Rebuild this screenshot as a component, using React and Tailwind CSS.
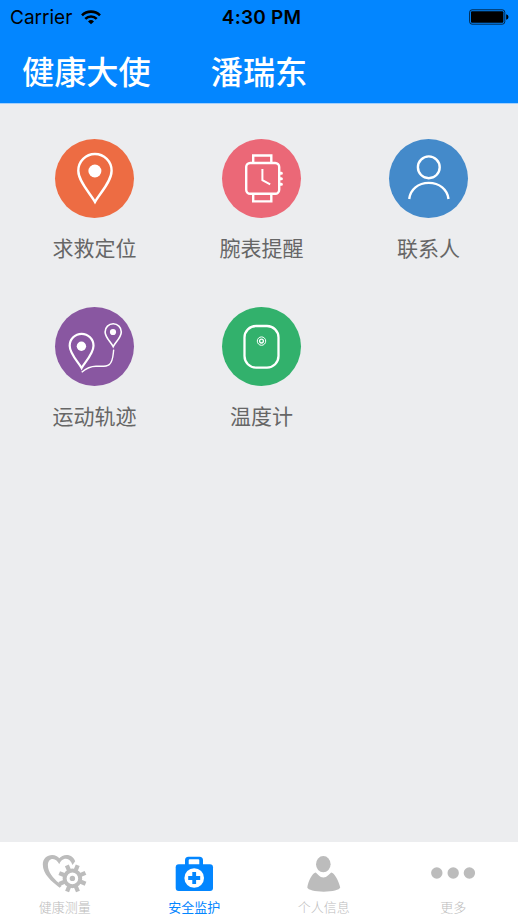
import { useState } from 'react';
import clsx from 'clsx';

const LocationIcon = () => (
  <svg viewBox="0 0 79 79" className="w-full h-full" fill="none" stroke="white" strokeWidth="2.4">
    <path d="M40 63C36 55.5 23.3 42.5 23.3 31.7a16.6 16.6 0 0 1 33.3 0C56.6 42.5 44 55.5 40 63Z" />
    <circle cx="39.9" cy="32" r="6.5" fill="white" stroke="none" />
  </svg>
);

const WatchIcon = () => (
  <svg viewBox="0 0 79 79" className="w-full h-full" fill="none" stroke="white" strokeWidth="2.4">
    <path d="M31.2 23v-6.5h18.1V23M31.2 55v7.4h18.1V55" />
    <rect x="24.2" y="24" width="33" height="30.8" rx="4" />
    <path d="M40.4 30v11.2l7.8 4.2" strokeWidth="2" />
    <path d="M58 34.3h1.4M58 39.8h1.4M58 45.2h1.4" strokeWidth="3" strokeLinecap="round" />
  </svg>
);

const ContactIcon = () => (
  <svg viewBox="0 0 79 79" className="w-full h-full" fill="none" stroke="white" strokeWidth="2.4">
    <circle cx="39.8" cy="28.3" r="10.9" />
    <path d="M20.2 60C21.3 50.5 29.2 43.9 39.8 43.9S58.4 50.5 59.5 60" />
  </svg>
);

const TrackIcon = () => (
  <svg viewBox="0 0 79 79" className="w-full h-full" fill="none" stroke="white">
    <path d="M26.6 61C23.8 55.5 14.7 47 14.7 38.7a11.9 11.9 0 0 1 23.8 0C38.5 47 29.4 55.5 26.6 61Z" strokeWidth="2.2" />
    <circle cx="26.4" cy="39.3" r="4.7" fill="white" stroke="none" />
    <path d="M58.2 39.6C56.2 35.5 50.1 30.3 50.1 24.9a8.1 8.1 0 0 1 16.2 0C66.3 30.3 60.2 35.5 58.2 39.6Z" strokeWidth="1.6" />
    <circle cx="58" cy="25" r="3.1" fill="white" stroke="none" />
    <path d="M26.7 65.3C31 61.5 35.5 59.2 41 59.2S51 60 54.2 57.6C58.2 54.5 58 48 58.7 42.7" strokeWidth="1.4" />
  </svg>
);

const ThermometerIcon = () => (
  <svg viewBox="0 0 79 79" className="w-full h-full" fill="none" stroke="white">
    <rect x="22.5" y="19" width="34" height="41.6" rx="11.5" strokeWidth="2.3" />
    <circle cx="39.5" cy="34.1" r="4.2" strokeWidth="1" />
    <circle cx="39.5" cy="34.1" r="1.9" strokeWidth="1.3" />
  </svg>
);

const HealthTabIcon = () => (
  <svg viewBox="0 0 48 40" className="w-12 h-10" fill="none" stroke="currentColor">
    <path
      d="M18.7 34.7C10.5 28.5 1.8 21 1.8 11.5C1.8 5.5 6 1.9 11.2 1.9C14.3 1.9 16.8 3.2 18.3 5.2C20 3.2 22.4 1.9 25.6 1.9C29.8 1.9 33 4.5 34.2 8.2L31.5 12C30.2 8.2 28 5.8 25 5.8C21.5 5.8 19.5 8.2 18.3 11.3C16.8 8 14.5 5.9 11.8 5.9C8.6 5.9 6.9 8.6 6.9 12.2C6.9 19 12 25 18 30L20.5 33Z"
      fill="currentColor"
      stroke="none"
    />
    <circle cx="31.4" cy="25.4" r="11.4" fill="white" stroke="none" />
    <circle cx="31.4" cy="25.4" r="7.8" strokeWidth="4" />
    {[22, 67, 112, 157, 202, 247, 292, 337].map((angle) => (
      <path key={angle} d="M31.4 17v-5.8" strokeWidth="4.2" transform={`rotate(${angle} 31.4 25.4)`} />
    ))}
    <circle cx="31.4" cy="25.4" r="2.7" fill="currentColor" stroke="none" />
  </svg>
);

const SafetyTabIcon = () => (
  <svg viewBox="0 0 48 40" className="w-12 h-10" fill="currentColor">
    <rect x="5.7" y="11.3" width="37.3" height="26.7" rx="3" />
    <path d="M15 12V7.2Q15 3.7 18.5 3.7h11Q33 3.7 33 7.2V12H29.3V7.3Q29.3 6.3 28.3 6.3H19.7Q18.7 6.3 18.7 7.3V12Z" />
    <circle cx="24.2" cy="25" r="9.8" fill="white" />
    <path d="M22.3 19h3.8v4.1h4.1v3.8h-4.1V31h-3.8v-4.1h-4.1v-3.8h4.1Z" />
  </svg>
);

const ProfileTabIcon = () => (
  <svg viewBox="0 0 48 40" className="w-12 h-10" fill="currentColor">
    <ellipse cx="23.3" cy="11.2" rx="7.3" ry="8.1" />
    <path d="M15.8 19.4C17.8 21 19.6 24.4 23.4 24.4S29 21 31.2 19.4C34.5 19.9 38.8 27.5 40.2 34.6C39.6 37 32.5 38.7 23.7 38.7S7.8 37 7.3 34.6C8.2 27.5 12.4 19.9 15.8 19.4Z" />
  </svg>
);

const MoreTabIcon = () => (
  <svg viewBox="0 0 48 40" className="w-12 h-10" fill="currentColor">
    <circle cx="7.8" cy="20" r="5.7" />
    <circle cx="24.2" cy="20" r="5.7" />
    <circle cx="40.4" cy="20" r="5.7" />
  </svg>
);

const features = [
  { label: '求救定位', color: 'bg-[#ed6c43]', Icon: LocationIcon },
  { label: '腕表提醒', color: 'bg-[#eb6877]', Icon: WatchIcon },
  { label: '联系人', color: 'bg-[#448aca]', Icon: ContactIcon },
  { label: '运动轨迹', color: 'bg-[#8957a1]', Icon: TrackIcon },
  { label: '温度计', color: 'bg-[#32b16c]', Icon: ThermometerIcon },
];

const tabs = [
  { label: '健康测量', Icon: HealthTabIcon },
  { label: '安全监护', Icon: SafetyTabIcon },
  { label: '个人信息', Icon: ProfileTabIcon },
  { label: '更多', Icon: MoreTabIcon },
];

const StatusBar = () => (
  <div className="grid grid-cols-3 items-center h-[34px] pl-[10px] pr-[9px] text-black font-['Inter','Liberation_Sans',sans-serif]">
    <div className="flex items-center gap-[9px]">
      <span className="text-[19px] leading-none">Carrier</span>
      <svg viewBox="0 0 20 15" className="w-5 h-[15px]" fill="none" stroke="currentColor" strokeWidth="2.6">
        <path d="M1 5.3a12.8 12.8 0 0 1 18 0" />
        <path d="M4.3 8.9a8.1 8.1 0 0 1 11.4 0" />
        <path d="M10 14.3 7 11.4a4.3 4.3 0 0 1 6 0Z" fill="currentColor" stroke="none" />
      </svg>
    </div>
    <span className="pl-[4px] text-center text-[19px] leading-none tracking-[0.2px] font-semibold whitespace-nowrap">
      4:30 PM
    </span>
    <svg viewBox="0 0 40 16" className="w-10 h-4 justify-self-end">
      <rect x="0.6" y="0.8" width="35.2" height="14.4" rx="2.5" fill="none" stroke="black" strokeOpacity="0.7" strokeWidth="1" />
      <rect x="2" y="2.2" width="32.4" height="11.6" rx="1" fill="black" />
      <path d="M37.2 5.2q2.3 .8 2.3 2.8t-2.3 2.8Z" fill="black" />
    </svg>
  </div>
);

const App = () => {
  const [activeTab, setActiveTab] = useState('安全监护');

  return (
    <div className="flex flex-col w-full h-screen overflow-hidden bg-[#ecedef] font-['Noto_Sans_CJK_SC',sans-serif]">
      <header className="shrink-0 h-[104px] bg-[#0386ff] border-b border-[#a5d0fb]">
        <StatusBar />
        <h1 className="flex gap-[60px] pl-[22px] pt-[12px] text-[32.2px] leading-[48px] font-medium text-white">
          <span>健康大使</span>
          <span>潘瑞东</span>
        </h1>
      </header>

      <main className="flex-1 pl-[11px] pr-[6px] pt-[35px]">
        <div className="grid grid-cols-3">
          {features.map(({ label, color, Icon }) => (
            <button key={label} className="flex flex-col items-center h-[168px]">
              <span className={clsx('w-[79px] h-[79px] rounded-full', color)}>
                <Icon />
              </span>
              <span className="mt-[13px] text-[21px] leading-8 text-[#666666]">{label}</span>
            </button>
          ))}
        </div>
      </main>

      {/* Bottom tabs */}
      <nav className="shrink-0 grid grid-cols-4 h-[78px] bg-white">
        {tabs.map(({ label, Icon }) => (
          <button
            key={label}
            onClick={() => setActiveTab(label)}
            className={clsx(
              'flex flex-col items-center pt-[11px]',
              activeTab === label ? 'text-[#0386ff] font-normal' : 'text-[#bcbcbc] font-light'
            )}
          >
            <Icon />
            <span className="mt-[4px] text-[13px] leading-5">{label}</span>
          </button>
        ))}
      </nav>
    </div>
  );
};

export default App;
